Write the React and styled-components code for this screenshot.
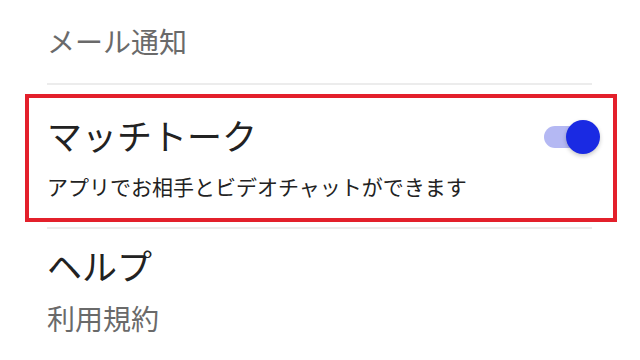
import React, { useState } from "react";
import styled, { createGlobalStyle } from "styled-components";

const GlobalStyle = createGlobalStyle`
  html, body {
    margin: 0;
    padding: 0;
    background: #ffffff;
  }
  body {
    font-family: "Noto Sans CJK JP", "Noto Sans", sans-serif;
  }
`;

const Page = styled.div`
  width: 640px;
  height: 360px;
  box-sizing: border-box;
  padding: 24px 48px 0 47px;
  overflow: hidden;
  display: flex;
  flex-direction: column;
`;

const Label = styled.div`
  font-size: ${({ $size }) => $size}px;
  line-height: ${({ $line }) => $line}px;
  color: ${({ $muted }) => ($muted ? "#6a6a6a" : "#222222")};
  margin-top: ${({ $gap }) => $gap || 0}px;
  white-space: nowrap;
`;

const Divider = styled.div`
  height: 2px;
  background: #ececec;
  margin: ${({ $top }) => $top}px 0 ${({ $bottom }) => $bottom}px;
`;

const Highlight = styled.section`
  margin: 0 -25px 0 -22px;
  border: 4px solid #e3202b;
  padding: 16px 13px 18px 18px;
  display: flex;
  flex-direction: column;
  gap: 16px;
`;

const TitleRow = styled.div`
  display: flex;
  align-items: center;
  justify-content: space-between;
`;

const Switch = styled.button`
  position: relative;
  width: 56px;
  height: 34px;
  padding: 0;
  border: none;
  background: transparent;
  cursor: pointer;
  margin-top: 4px;
`;

const Track = styled.span`
  position: absolute;
  left: 0;
  top: 6px;
  width: 48px;
  height: 22px;
  border-radius: 11px;
  background: ${({ $on }) => ($on ? "#b4b8f3" : "#c8c8c8")};
`;

const Thumb = styled.span`
  position: absolute;
  top: 0;
  left: ${({ $on }) => ($on ? "22px" : "0px")};
  width: 34px;
  height: 34px;
  border-radius: 50%;
  background: ${({ $on }) => ($on ? "#1a2ae3" : "#f5f5f5")};
  box-shadow: 0 2px 4px rgba(0, 0, 0, 0.22);
`;

const App = () => {
  const [matchTalk, setMatchTalk] = useState(true);

  return (
    <>
      <GlobalStyle />
      <Page>
        <Label $size={28} $line={34} $muted>
          メール通知
        </Label>
        <Divider $top={25} $bottom={9} />
        <Highlight>
          <TitleRow>
            <Label $size={35} $line={42}>
              マッチトーク
            </Label>
            <Switch
              aria-pressed={matchTalk}
              onClick={() => setMatchTalk(!matchTalk)}
            >
              <Track $on={matchTalk} />
              <Thumb $on={matchTalk} />
            </Switch>
          </TitleRow>
          <Label $size={21} $line={28}>
            アプリでお相手とビデオチャットができます
          </Label>
        </Highlight>
        <Divider $top={5} $bottom={15} />
        <Label $size={35} $line={42}>
          ヘルプ
        </Label>
        <Label $size={28} $line={34} $muted $gap={15}>
          利用規約
        </Label>
      </Page>
    </>
  );
};

export default App;
